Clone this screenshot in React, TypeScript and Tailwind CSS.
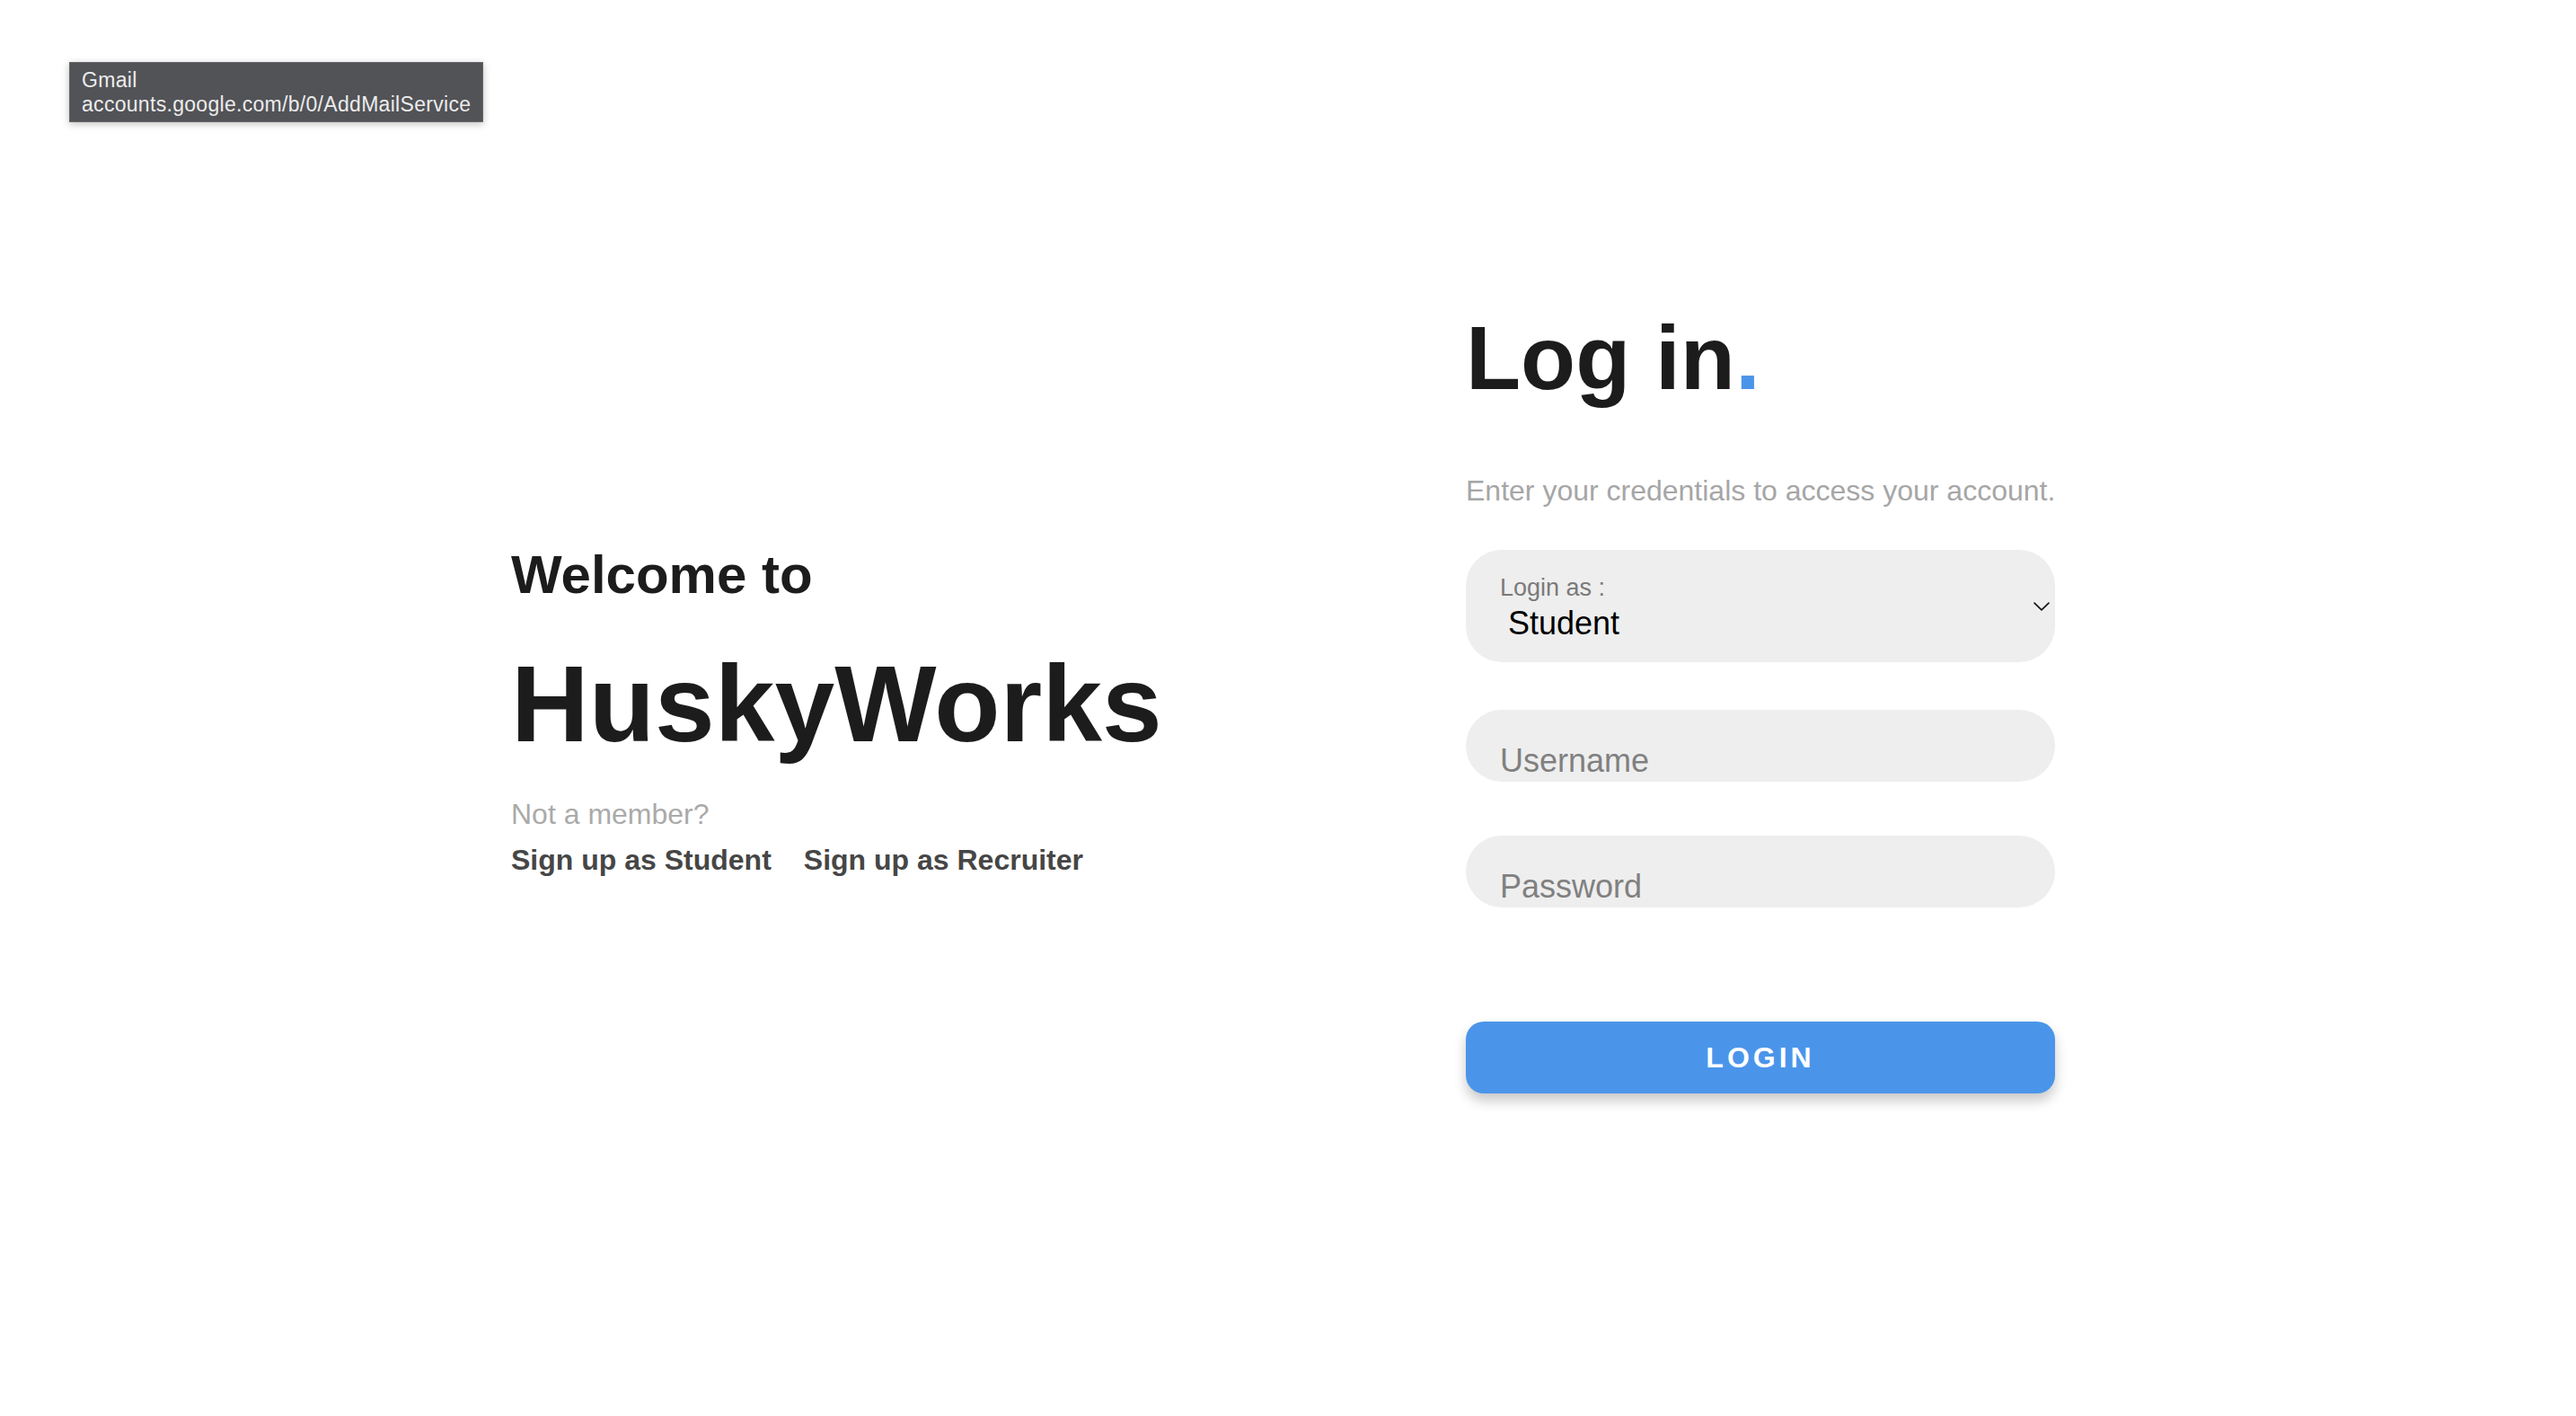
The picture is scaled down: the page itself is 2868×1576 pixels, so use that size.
import React from "react";

const ChevronDown = () => (
  <svg width="18" height="10" viewBox="0 0 18 10" fill="none" className="block">
    <path d="M1 1.2 L9 8.8 L17 1.2" stroke="#111111" strokeWidth="1.6" strokeLinecap="round" strokeLinejoin="round" />
  </svg>
);

const Tooltip = () => (
  <div className="absolute left-[77px] top-[69px] w-[461px] border border-[#66676a] bg-[#525357] px-[13px] pt-[6px] pb-[5px] text-[23px] leading-[27px] tracking-[0.3px] whitespace-nowrap text-[#ececec] shadow-[0_2px_8px_rgba(0,0,0,0.25)]">
    <div>Gmail</div>
    <div>accounts.google.com/b/0/AddMailService</div>
  </div>
);

const Welcome = () => (
  <div className="w-[1063px] shrink-0 pt-[610px] text-[#1c1c1c]">
    <h2 className="text-[60px] leading-[60px] font-bold">Welcome to</h2>
    <h1 className="mt-[53px] text-[120px] leading-[120px] font-bold">HuskyWorks</h1>
    <p className="mt-[47px] text-[32px] leading-[32px] text-[#aaaaaa]">Not a member?</p>
    <div className="mt-[19px] flex gap-[36px] text-[32px] leading-[32px] font-bold text-[#464646]">
      <a href="#">Sign up as Student</a>
      <a href="#">Sign up as Recruiter</a>
    </div>
  </div>
);

const LoginForm = () => (
  <div className="w-[656px] shrink-0 pt-[348px]">
    <h1 className="text-[100px] leading-[100px] font-bold text-[#1c1c1c]">
      Log in<span className="text-[#4a95ea]">.</span>
    </h1>
    <p className="mt-[82px] whitespace-nowrap text-[32px] leading-[32px] text-[#a6a6a6]">
      Enter your credentials to access your account.
    </p>

    <div className="mt-[50px] flex h-[125px] rounded-[40px] bg-[#eeeeee] pl-[38px] pr-[6px]">
      <div className="flex-1 pt-[29px]">
        <div className="text-[27px] leading-[27px] text-[#7a7a7a]">Login as :</div>
        <div className="mt-[8px] pl-[9px] text-[36px] leading-[36px] text-black">Student</div>
      </div>
      <div className="self-center">
        <ChevronDown />
      </div>
    </div>

    <input
      type="text"
      placeholder="Username"
      className="mt-[53px] block h-[80px] w-full rounded-full bg-[#eeeeee] pl-[38px] pt-[34px] text-[36px] leading-[36px] outline-none placeholder:text-[#808080]"
    />
    <input
      type="password"
      placeholder="Password"
      className="mt-[60px] block h-[80px] w-full rounded-full bg-[#eeeeee] pl-[38px] pt-[34px] text-[36px] leading-[36px] outline-none placeholder:text-[#808080]"
    />

    <button className="mt-[127px] flex h-[80px] w-full items-center justify-center rounded-[20px] bg-[#4a95ea] text-[32px] leading-[32px] font-bold tracking-[4px] text-white shadow-[0_8px_14px_rgba(0,0,0,0.22)]">
      LOGIN
    </button>
  </div>
);

export default function App() {
  return (
    <div className="relative h-screen w-full overflow-hidden bg-white font-['Liberation_Sans',Arial,sans-serif]">
      <Tooltip />
      <div className="flex pl-[569px]">
        <Welcome />
        <LoginForm />
      </div>
    </div>
  );
}
